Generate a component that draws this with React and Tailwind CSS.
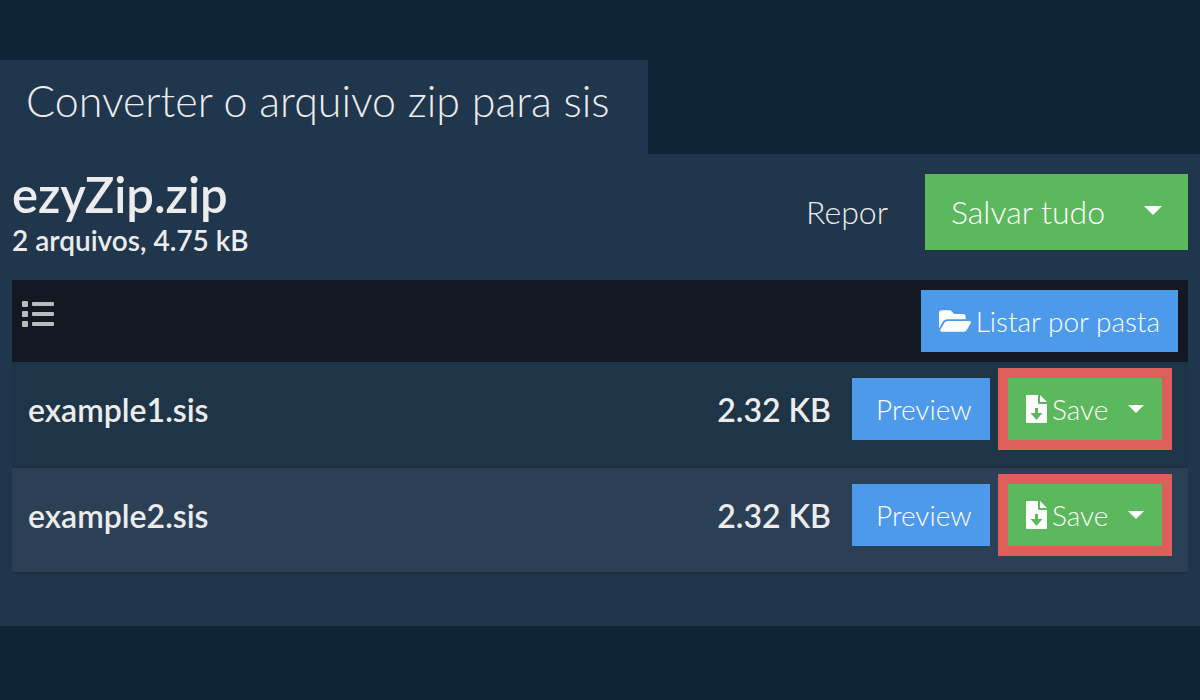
import { FaFolderOpen, FaList } from 'react-icons/fa';

const files = [
  { name: 'example1.sis', size: '2.32 KB' },
  { name: 'example2.sis', size: '2.32 KB' },
];

function Caret({ className }) {
  return (
    <svg viewBox="0 0 18 9" className={className} fill="currentColor" aria-hidden="true">
      <path d="M0 0h18L9 9z" />
    </svg>
  );
}

function FileDownload() {
  return (
    <svg viewBox="0 0 21 28" className="w-[21px] h-7" fill="currentColor" aria-hidden="true">
      <path fillRule="evenodd" d="M1 0h11v8q0 1 1 1h8v18q0 1-1 1H1q-1 0-1-1V1q0-1 1-1zM9 13v5H4.500l6 7 6-7H12v-5z" />
      <path d="M14 0v7h7z" />
    </svg>
  );
}

export default function App() {
  return (
    <div className="min-h-screen bg-[#0e2437] pt-[60px] font-['Lato',sans-serif] text-[#ececec]">
      <div className="flex">
        <h1 className="bg-[#20364d] h-[94px] pl-[26px] pr-[38px] pt-[13px] text-[43px] leading-[56px] font-light">
          Converter o arquivo zip para sis
        </h1>
      </div>

      <main className="bg-[#20364d] px-3 pt-5 pb-[52px]">
        <div className="flex items-start justify-between h-[106px]">
          <div className="font-semibold">
            <h2 className="text-[49px] leading-[40px]">ezyZip.zip</h2>
            <p className="text-[28px] leading-[52px]">2 arquivos, 4.75 kB</p>
          </div>
          <div className="flex font-light text-[32px] leading-[76px]">
            <button className="mr-[37px]">Repor</button>
            <div className="flex bg-[#5cb85c] text-white">
              <button className="pl-[26px] pr-[25px]">Salvar tudo</button>
              <button aria-label="Mais opções para salvar tudo" className="pl-[14px] pr-[26px] pb-1">
                <Caret className="w-[18px] h-[9px]" />
              </button>
            </div>
          </div>
        </div>

        <div className="flex items-start justify-between bg-[#121922] h-[82px] p-[10px]">
          <button aria-label="Lista" className="mt-2 text-[#b8bcbf]">
            <FaList size={32} />
          </button>
          <button className="flex items-center gap-[5px] bg-[#4d9aea] h-[62px] px-[18px] text-[28px] font-light text-white">
            <FaFolderOpen size={32} />
            Listar por pasta
          </button>
        </div>

        <table className="w-full border-separate border-spacing-0">
          <tbody>
            {files.map((file) => (
              <tr key={file.name} className="h-[106px] odd:bg-[#1e3447] even:bg-[#2b4055] align-top">
                <td className="border-b-2 border-[#1c3042] pl-4 pt-[26px] text-[32px] leading-[44px] font-semibold">{file.name}</td>
                <td className="border-b-2 border-[#1c3042] pr-[21px] pt-[26px] text-[32px] leading-[44px] font-semibold text-right">{file.size}</td>
                <td className="border-b-2 border-[#1c3042] w-[336px] pt-[6px] pr-4">
                  <div className="flex items-center justify-between text-[28px] font-light text-white">
                    <button className="bg-[#4d9aea] h-[62px] pl-6 pr-[18px]">Preview</button>
                    <div className="border-10 border-[#dd5e5b]">
                      <div className="flex items-center bg-[#5cb85c] h-[62px] w-[154px]">
                        <button className="flex items-center gap-[5px] pl-[18px]">
                          <FileDownload />
                          Save
                        </button>
                        <button aria-label={`Mais opções para ${file.name}`} className="ml-auto pr-[18px]">
                          <Caret className="w-4 h-2" />
                        </button>
                      </div>
                    </div>
                  </div>
                </td>
              </tr>
            ))}
          </tbody>
        </table>
      </main>
    </div>
  );
}
